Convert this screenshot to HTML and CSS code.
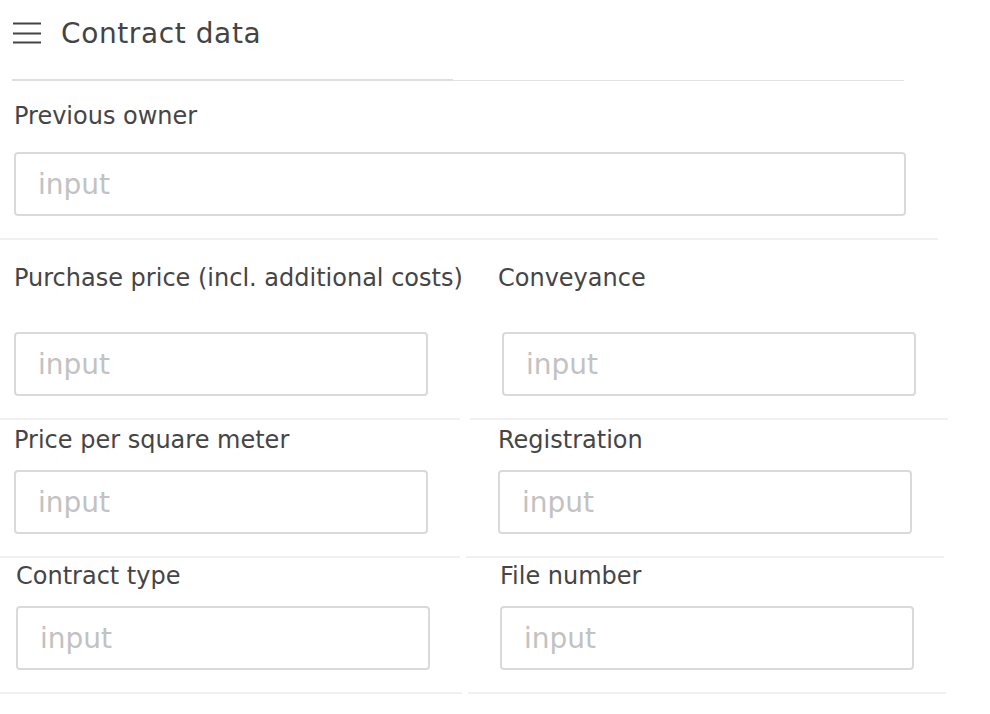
FILE: index.html
```html
<!DOCTYPE html>
<html lang="en">
<head>
<meta charset="utf-8">
<title>Contract data</title>
<link rel="stylesheet" href="styles.css">
</head>
<body>
<header class="header">
  <svg class="menu-icon" width="28" height="24" viewBox="0 0 28 24" aria-hidden="true">
    <path d="M0 1.5H28M0 11.5H28M0 20.5H28" stroke="#444" stroke-width="2.2" fill="none"/>
  </svg>
  <h1 class="title">Contract data</h1>
</header>
<div class="tabline">
  <span class="tabline__active"></span>
  <span class="tabline__rest"></span>
</div>

<div class="row">
  <div class="cell cell--full cell--r1">
    <label class="label">Previous owner</label>
    <input class="field field--wide" placeholder="input">
  </div>
</div>

<div class="row row--r2">
  <div class="cell cell--left cell--r2">
    <label class="label">Purchase price (incl. additional costs)</label>
    <input class="field" placeholder="input">
  </div>
  <div class="cell cell--right cell--r2">
    <label class="label label--conv">Conveyance</label>
    <input class="field" placeholder="input">
  </div>
</div>

<div class="row row--r3">
  <div class="cell cell--left cell--r3">
    <label class="label">Price per square meter</label>
    <input class="field" placeholder="input">
  </div>
  <div class="cell cell--right cell--r3">
    <label class="label">Registration</label>
    <input class="field" placeholder="input">
  </div>
</div>

<div class="row row--r3">
  <div class="cell cell--left cell--wide-left cell--r4">
    <label class="label">Contract type</label>
    <input class="field" placeholder="input">
  </div>
  <div class="cell cell--right cell--r4">
    <label class="label">File number</label>
    <input class="field" placeholder="input">
  </div>
</div>
</body>
</html>
```
FILE: styles.css
```css
* { box-sizing: border-box; }

body {
  margin: 0;
  background: #ffffff;
  font-family: "DejaVu Sans", "Liberation Sans", sans-serif;
  color: #444444;
}

.header {
  display: flex;
  align-items: center;
  gap: 20px;
  height: 68px;
  padding-left: 13px;
}

.menu-icon { display: block; flex: none; }

.title {
  margin: 0;
  font-size: 28px;
  font-weight: normal;
  letter-spacing: 0.6px;
  line-height: 34px;
  color: #444444;
}

.tabline {
  display: flex;
  align-items: flex-end;
  width: 892px;
  height: 2px;
  margin: 11px 0 0 12px;
}

.tabline__active {
  flex: 0 0 441px;
  height: 2px;
  background: #dedede;
}

.tabline__rest {
  flex: 1;
  height: 1px;
  background: #e2e2e2;
}

.row {
  display: flex;
}

.row--r2 { gap: 10px; }
.row--r3 { gap: 6px; }

.cell {
  display: flex;
  flex-direction: column;
  align-items: flex-start;
  border-bottom: 2px solid #f0f0f0;
  padding-bottom: 22px;
}

.cell--full { width: 938px; padding-left: 14px; }
.cell--left { width: 460px; padding-left: 14px; }
.cell--wide-left { width: 462px; padding-left: 16px; }
.cell--right { width: 478px; padding-left: 32px; }

.label {
  display: block;
  font-size: 24px;
  line-height: 32px;
  color: #454545;
  white-space: nowrap;
}

.label--conv { margin-left: -4px; }

.cell--r1 { padding-top: 19px; }
.cell--r1 .label { margin-bottom: 20px; }

.cell--r2 { padding-top: 22px; }
.cell--r2 .label { margin-bottom: 38px; }

.cell--r3 { padding-top: 4px; }
.cell--r3 .label { margin-bottom: 14px; }

.cell--r4 { padding-top: 2px; }
.cell--r4 .label { margin-bottom: 14px; }

.field {
  display: block;
  width: 414px;
  height: 64px;
  margin: 0;
  padding: 0 22px;
  border: 2px solid #dadada;
  border-radius: 4px;
  background: #ffffff;
  font-family: "DejaVu Sans", "Liberation Sans", sans-serif;
  font-size: 28px;
  color: #444444;
  outline: none;
}

.field--wide { width: 892px; }

.field::placeholder {
  color: #c2c2c2;
  opacity: 1;
}
```
